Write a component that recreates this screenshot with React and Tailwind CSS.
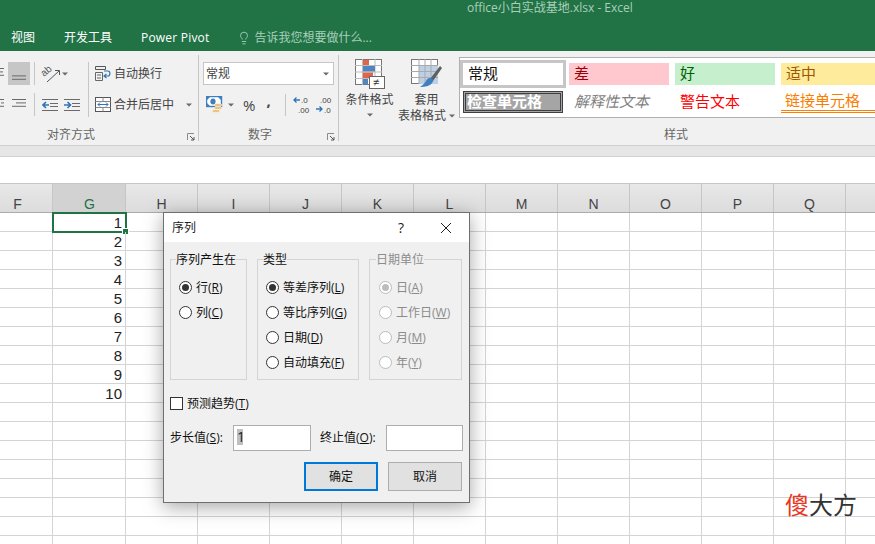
import React from 'react';
import { Lightbulb } from 'lucide-react';

// R is wider than the window, its letter falls off the right edge
const COLS = ['H', 'I', 'J', 'K', 'L', 'M', 'N', 'O', 'P', 'Q', ''];
const ROWS = Array.from({ length: 18 }, (_, i) => i + 1);

const Caret = ({ className = '' }) => (
  <svg width="6" height="4" viewBox="0 0 6 4" className={`shrink-0 ${className}`}>
    <path d="M0 0.5h6L3 3.5z" fill="#6a6a6a" />
  </svg>
);

const Launcher = ({ className = '' }) => (
  <svg width="8" height="8" viewBox="0 0 8 8" className={className}>
    <path d="M0.5 7V0.5H7" stroke="#8a8a8a" fill="none" />
    <path d="M3 3l4 4M7 4v3H4" stroke="#555" fill="none" />
  </svg>
);

// rows of short strokes, the text-align glyphs of the ribbon
const AlignIcon = ({ lines, width = 14 }) => (
  <svg width={width} height="11" viewBox={`0 0 ${width} 11`} className="shrink-0">
    {lines.map(([x, w], i) => (
      <rect key={i} x={x} y={i * 3.4} width={w} height="1" fill="#6a6a6a" />
    ))}
  </svg>
);

const OrientIcon = () => (
  <svg width="18" height="18" viewBox="0 0 18 18" className="shrink-0 overflow-visible">
    <text x="2" y="12" fontSize="10" fill="#555" transform="rotate(-40 2 12)" fontFamily="Liberation Sans">ab</text>
    <path d="M5 17L17 6M13 5.500h4.500V10" stroke="#555" fill="none" />
  </svg>
);

const IndentIcon = ({ flip }) => (
  <svg width="16" height="12" viewBox="0 0 16 12" className="shrink-0">
    <path d="M0 .5h16M8 4.500h8M8 7.500h8M0 11.500h16" stroke="#6a6a6a" />
    {flip ? (
      <path d="M0 6h6M3.500 3L6.500 6L3.500 9" stroke="#2f75b5" strokeWidth="1.6" fill="none" />
    ) : (
      <path d="M7 6H1M4 3L1 6L4 9" stroke="#2f75b5" strokeWidth="1.6" fill="none" />
    )}
  </svg>
);

const WrapIcon = () => (
  <svg width="16" height="16" viewBox="0 0 16 16" className="shrink-0">
    <path d="M.5 .5h10v3H.5z" stroke="#555" fill="none" />
    <path d="M.5 6.500h7v8h-7zM2 9h4M2 12h4" stroke="#666" fill="none" />
    <path d="M9 5h4c2.500 0 2.500 5 0 5H9.500M11.500 8L9 10l2.500 2" stroke="#2f75b5" fill="none" strokeWidth="1.2" />
  </svg>
);

const MergeIcon = () => (
  <svg width="16" height="15" viewBox="0 0 16 15" className="shrink-0">
    <rect x=".5" y=".5" width="15" height="14" fill="#fff" stroke="#555" />
    <path d="M.5 4.500h15M.5 10.500h15M8 .5v4M8 10.500v4" stroke="#888" />
    <path d="M3 7.500h10M5 5.500l-2 2 2 2M11 5.500l2 2-2 2" stroke="#2f75b5" fill="none" />
  </svg>
);

const MoneyIcon = () => (
  <svg width="17" height="17" viewBox="0 0 17 17" className="shrink-0">
    <rect x=".5" y=".5" width="15" height="10" fill="#fff" stroke="#3f7fbf" strokeWidth="1.4" />
    <path d="M1 1h3L1 4zM15 1v3l-3-3zM1 10V7l3 3z" fill="#3f7fbf" />
    <ellipse cx="7" cy="5.500" rx="2.600" ry="3" fill="#3f7fbf" />
    <ellipse cx="12" cy="9" rx="4" ry="1.600" fill="#edc17a" stroke="#fff" strokeWidth=".5" />
    <ellipse cx="12" cy="12" rx="4" ry="1.600" fill="#edc17a" stroke="#fff" strokeWidth=".5" />
    <ellipse cx="10" cy="15" rx="4" ry="1.600" fill="#edc17a" stroke="#fff" strokeWidth=".5" />
  </svg>
);

const DecimalIcon = ({ more }) => (
  <svg width="17" height="17" viewBox="0 0 17 17" className="shrink-0">
    <text x={more ? 8 : 5} y="7" fontSize="8" fill="#444" fontFamily="Liberation Sans">{more ? '.0' : '.00'}</text>
    <text x={more ? 5 : 9} y="16.500" fontSize="8" fill="#444" fontFamily="Liberation Sans">{more ? '.00' : '.0'}</text>
    {more ? (
      <path d="M7 4H1M3.500 1.500L1 4l2.500 2.500" stroke="#2f75b5" strokeWidth="1.3" fill="none" />
    ) : (
      <path d="M1 13h6M4.500 10.500L7 13l-2.500 2.500" stroke="#2f75b5" strokeWidth="1.3" fill="none" />
    )}
  </svg>
);

const CondFormatIcon = () => (
  <svg width="30" height="30" viewBox="0 0 30 30">
    <rect x=".5" y=".5" width="26" height="25" fill="#fff" stroke="#777" />
    <path d="M7.500 0v26M20 0v26M0 6.500h27M0 13h27M0 19.500h27" stroke="#bbb" />
    <rect x="8" y="1" width="6" height="5" fill="#e0654a" />
    <rect x="8" y="7" width="12" height="5.500" fill="#4f86c0" />
    <rect x="8" y="13.500" width="10" height="5.500" fill="#e0654a" />
    <rect x="8" y="20" width="5" height="5.500" fill="#4f86c0" />
    <rect x="14.500" y="17.500" width="15" height="12" fill="#fff" stroke="#666" />
    <text x="18" y="27" fontSize="11" fill="#333" fontFamily="Liberation Sans">≠</text>
  </svg>
);

const TableFormatIcon = () => (
  <svg width="32" height="30" viewBox="0 0 32 30">
    <rect x=".5" y=".5" width="26" height="24" fill="#fff" stroke="#777" />
    <rect x="8" y="7" width="19" height="18" fill="#bcd0e6" />
    <path d="M8 0v25M14 0v25M20 0v25M0 6.500h27M0 12.500h27M0 18.500h27" stroke="#aaa" />
    <path d="M19 20L29 7l2 2-9 13z" fill="#5f5f5f" />
    <path d="M19 19c3 0 4 3 2 5-2 3-7 4-12 4 3-2 5-4 6-6 1-2 2-3 4-3z" fill="#3f7fbf" />
  </svg>
);

const Sep = ({ className = '' }) => <div className={`w-px bg-[#c6c6c6] ${className}`} />;

const Radio = ({ checked, disabled }) => (
  <span className={`flex h-[13px] w-[13px] shrink-0 items-center justify-center rounded-full border bg-white ${disabled ? 'border-[#bcbcbc]' : 'border-[#333]'}`}>
    {checked && <span className={`h-[7px] w-[7px] rounded-full ${disabled ? 'bg-[#bcbcbc]' : 'bg-[#333]'}`} />}
  </span>
);

const RadioRow = ({ label, hot, checked, disabled }) => (
  <div className={`flex h-[25px] items-center gap-[4px] text-xs ${disabled ? 'text-[#8c8c8c]' : 'text-[#111]'}`}>
    <Radio checked={checked} disabled={disabled} />
    <span>
      {label}(<u>{hot}</u>)
    </span>
  </div>
);

const Group = ({ title, width, padding, disabled, children }) => (
  <fieldset className={`h-[129px] border border-[#d4d4d4] ${width} ${padding}`}>
    <legend className={`-ml-[3px] h-4 text-xs leading-[18px] ${disabled ? 'text-[#8c8c8c]' : 'text-[#111]'}`}>{title}</legend>
    <div className="pt-[8px]">{children}</div>
  </fieldset>
);

const SeriesDialog = () => (
  <div className="absolute left-[163px] top-[212px] flex h-[291px] w-[307px] flex-col border border-[#6f6f6f] bg-[#f0f0f0] shadow-[0_4px_18px_rgba(0,0,0,0.35)]">
    <div className="flex h-[29px] shrink-0 items-center bg-white pl-[8px] text-xs text-[#222]">
      <span>序列</span>
      <span className="ml-[202px] text-sm leading-none text-[#222]">?</span>
      <svg width="12" height="12" viewBox="0 0 12 12" className="ml-[36px]">
        <path d="M1 1l10 10M11 1L1 11" stroke="#222" strokeWidth="1" />
      </svg>
    </div>
    <div className="flex flex-col px-[6px] pt-[9px]">
      <div className="flex gap-[10px]">
        <Group title="序列产生在" width="w-[77px]" padding="pl-[8px]">
          <RadioRow label="行" hot="R" checked />
          <RadioRow label="列" hot="C" />
        </Group>
        <Group title="类型" width="w-[102px]" padding="pl-[8px]">
          <RadioRow label="等差序列" hot="L" checked />
          <RadioRow label="等比序列" hot="G" />
          <RadioRow label="日期" hot="D" />
          <RadioRow label="自动填充" hot="F" />
        </Group>
        <Group title="日期单位" width="w-[93px]" padding="pl-[9px]" disabled>
          <RadioRow label="日" hot="A" checked disabled />
          <RadioRow label="工作日" hot="W" disabled />
          <RadioRow label="月" hot="M" disabled />
          <RadioRow label="年" hot="Y" disabled />
        </Group>
      </div>
      <div className="mt-[17px] flex h-[13px] items-center gap-[4px] text-xs text-[#111]">
        <span className="h-[13px] w-[13px] border border-[#333] bg-white" />
        <span>预测趋势(<u>T</u>)</span>
      </div>
      <div className="mt-[15px] flex h-[26px] items-center text-xs text-[#111]">
        <span className="w-[63px]">步长值(<u>S</u>):</span>
        <div className="h-[26px] w-[78px] border border-[#adadad] bg-white pl-[3px] pt-[3px]">
          <span className="block h-[16px] w-[6px] bg-[#c0c0c0] text-sm leading-4 text-[#222]">1</span>
        </div>
        <span className="ml-[9px] w-[66px]">终止值(<u>O</u>):</span>
        <div className="h-[26px] w-[77px] border border-[#adadad] bg-white" />
      </div>
      <div className="mt-[11px] flex justify-end gap-[10px] pr-[1px] text-xs text-[#111]">
        <button className="h-[29px] w-[74px] border-2 border-[#0078d7] bg-[#e1e1e1]">确定</button>
        <button className="h-[29px] w-[74px] border border-[#adadad] bg-[#e1e1e1]">取消</button>
      </div>
    </div>
  </div>
);

const Sheet = () => (
  <div className="flex-1 overflow-hidden bg-white">
    <div className="flex h-[29px] border-b border-[#ababab] bg-gradient-to-b from-[#e8e8e8] to-[#dcdcdc] text-[14px] leading-[16px] text-[#444] [font-family:'Liberation_Sans',sans-serif]">
      <div className="flex w-[53px] shrink-0 items-end justify-center border-r border-[#c6c6c6] pr-[17px]">F</div>
      <div className="flex w-[73px] shrink-0 items-end justify-center border-r border-[#c6c6c6] bg-[#d2d2d2] pl-[1px] text-[#217346]">G</div>
      {COLS.map((c, i) => (
        <div key={i} className="flex w-[72px] shrink-0 items-end justify-center border-r border-[#c6c6c6]">{c}</div>
      ))}
    </div>
    {ROWS.map((r) => (
      <div key={r} className="flex h-[19px] text-[15px] leading-[20px] text-[#222] [font-family:'Liberation_Sans',sans-serif]">
        <div className="w-[53px] shrink-0 border-b border-r border-[#d4d4d4]" />
        <div className="relative w-[73px] shrink-0 border-b border-r border-[#d4d4d4] pr-[3px] text-right">
          {r <= 10 ? r : ''}
          {r === 1 && (
            <>
              <div className="absolute left-[-1px] top-[-1px] h-[21px] w-[75px] border-2 border-[#217346]" />
              <div className="absolute left-[69px] top-[15px] h-[7px] w-[7px] border border-white bg-[#217346]" />
            </>
          )}
        </div>
        {COLS.map((c, i) => (
          <div key={i} className="w-[72px] shrink-0 border-b border-r border-[#d4d4d4]" />
        ))}
      </div>
    ))}
  </div>
);

const Ribbon = () => (
  <div className="flex h-[94px] shrink-0 bg-[#f1f1f1] pt-[4px] text-xs text-[#444]">
    {/* alignment */}
    <div className="h-[86px] w-[199px] shrink-0 border-r border-[#c6c6c6]">
      <div className="flex h-[72px] pt-[7px]">
        <div className="flex w-[88px] shrink-0 flex-col gap-[8px]">
          <div className="flex h-[23px] items-center">
            <div className="w-[8px] overflow-hidden">
              <AlignIcon width={5} lines={[[0, 4], [0, 3], [0, 4]]} />
            </div>
            <div className="flex h-[23px] w-[22px] items-end justify-center bg-[#c6c6c6] pb-[2px]">
              <AlignIcon lines={[[0, 0], [0, 14], [0, 14]]} />
            </div>
            <Sep className="ml-[4px] h-[23px]" />
            <div className="ml-[7px]"><OrientIcon /></div>
            <Caret className="ml-[2px]" />
          </div>
          <div className="flex h-[23px] items-center">
            <div className="w-[12px] overflow-hidden">
              <AlignIcon width={5} lines={[[0, 4], [1, 3], [0, 4]]} />
            </div>
            <AlignIcon lines={[[0, 14], [4, 10], [0, 14]]} />
            <Sep className="ml-[8px] h-[23px]" />
            <div className="ml-[7px]"><IndentIcon /></div>
            <div className="ml-[6px]"><IndentIcon flip /></div>
          </div>
        </div>
        <Sep className="h-[55px]" />
        <div className="flex flex-col gap-[8px] pl-[6px]">
          <div className="flex h-[23px] items-center gap-[3px]">
            <WrapIcon />
            <span>自动换行</span>
          </div>
          <div className="flex h-[23px] items-center gap-[3px]">
            <MergeIcon />
            <span>合并后居中</span>
            <Caret className="ml-[9px]" />
          </div>
        </div>
      </div>
      <div className="relative flex h-[14px] items-center pl-[47px] pt-[1px] text-[#666]">
        对齐方式
        <Launcher className="absolute left-[187px] top-[6px]" />
      </div>
    </div>
    {/* number */}
    <div className="h-[86px] w-[140px] shrink-0 border-r border-[#c6c6c6]">
      <div className="h-[72px] pl-[4px] pt-[7px]">
        <div className="flex h-[23px] w-[131px] items-center justify-between border border-[#c6c6c6] bg-white pl-[2px] pr-[4px]">
          <span>常规</span>
          <Caret />
        </div>
        <div className="mt-[8px] flex h-[23px] items-center pl-[3px]">
          <MoneyIcon />
          <Caret className="ml-[5px]" />
          <span className="ml-[9px] text-[15px]">%</span>
          <span className="ml-[11px] -mt-[8px] text-[15px] font-bold leading-none">,</span>
          <Sep className="ml-[14px] h-[22px]" />
          <div className="ml-[7px]"><DecimalIcon more /></div>
          <div className="ml-[5px]"><DecimalIcon /></div>
        </div>
      </div>
      <div className="relative flex h-[14px] items-center pl-[49px] pt-[1px] text-[#666]">
        数字
        <Launcher className="absolute left-[128px] top-[6px]" />
      </div>
    </div>
    {/* styles */}
    <div className="h-[86px] flex-1">
      <div className="flex h-[72px]">
        <div className="flex w-[60px] shrink-0 flex-col items-center pl-[1px] pt-[4px]">
          <CondFormatIcon />
          <span className="mt-[3px] leading-[16px]">条件格式</span>
          <Caret className="mt-[5px]" />
        </div>
        <div className="flex w-[55px] shrink-0 flex-col items-center pt-[4px]">
          <TableFormatIcon />
          <span className="mt-[3px] leading-[16px]">套用</span>
          <span className="flex items-center whitespace-nowrap leading-[16px]">
            表格格式<Caret className="ml-[3px]" />
          </span>
        </div>
        <div className="ml-[5px] mt-[2px] flex h-[61px] w-[416px] shrink-0 flex-col border border-r-0 border-[#b0b0b0] bg-white pt-[2px] text-[15px]">
          <div className="flex h-[28px] shrink-0">
            <div className="flex h-[28px] w-[106px] shrink-0 items-center border-[3px] border-[#c6c6c6] pb-[3px] pl-[5px] text-[#111]">常规</div>
            <div className="ml-[3px] mt-[3px] flex h-[22px] w-[100px] shrink-0 items-center bg-[#ffc7ce] pb-[3px] pl-[5px] text-[#9c0006]">差</div>
            <div className="ml-[6px] mt-[3px] flex h-[22px] w-[100px] shrink-0 items-center bg-[#c6efce] pb-[3px] pl-[5px] text-[#006100]">好</div>
            <div className="ml-[6px] mt-[3px] flex h-[22px] flex-1 items-center bg-[#ffeb9c] pb-[3px] pl-[5px] text-[#9c5700]">适中</div>
          </div>
          <div className="mt-[3px] flex h-[22px] shrink-0 items-center">
            <div className="ml-[3px] flex h-[22px] w-[100px] shrink-0 items-center overflow-hidden whitespace-nowrap border-[3px] border-double border-[#3f3f3f] bg-[#a5a5a5] pb-[2px] pl-[1px] font-bold text-white">检查单元格</div>
            <div className="w-[106px] shrink-0 pb-[2px] pl-[11px] italic text-[#7f7f7f]">解释性文本</div>
            <div className="w-[112px] shrink-0 pb-[2px] pl-[11px] text-[#ff0000]">警告文本</div>
            <div className="h-[22px] flex-1 border-b-[3px] border-double border-[#ff8001] pl-[4px] leading-[18px] text-[#fa7d00]">链接单元格</div>
          </div>
        </div>
      </div>
      <div className="flex h-[14px] items-center pl-[325px] pt-[2px] text-[#666]">样式</div>
    </div>
  </div>
);

export default function App() {
  return (
    <div className="relative flex h-[544px] w-[875px] flex-col overflow-hidden bg-white [font-family:'Open_Sans','Noto_Sans_CJK_SC',sans-serif]">
      {/* title + tabs */}
      <div className="h-[51px] shrink-0 bg-[#217346] text-xs">
        <div className="h-[25px] pl-[467px] leading-[15px] text-[#a9cfb9]">office小白实战基地.xlsx - Excel</div>
        <div className="flex h-[25px] items-center text-white">
          <span className="ml-[11px]">视图</span>
          <span className="ml-[29px]">开发工具</span>
          <span className="ml-[29px] tracking-[0.2px]">Power Pivot</span>
          <Lightbulb size={14} strokeWidth={1.5} className="ml-[28px] text-[#a9d0bb]" />
          <span className="ml-[3px] text-[#a9d0bb]">告诉我您想要做什么...</span>
        </div>
      </div>
      <Ribbon />
      <div className="h-[12px] shrink-0 border-y border-[#d0d0d0] bg-[#e6e6e6]" />
      <div className="h-[27px] shrink-0 border-b border-[#c6c6c6] bg-white" />
      <Sheet />
      <SeriesDialog />
      <div className="absolute left-[785px] top-[489px] text-2xl leading-[32px] text-[#333]">
        <span className="text-[#e8381f]">傻</span>大方
      </div>
    </div>
  );
}
